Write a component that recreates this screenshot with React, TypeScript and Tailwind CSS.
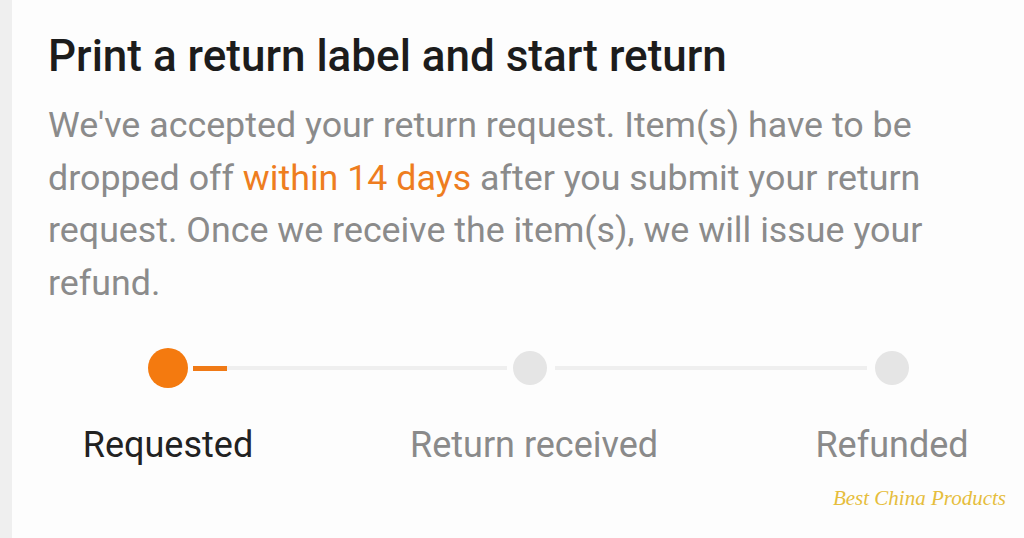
import React from "react";

const steps = [
    { label: "Requested", active: true },
    { label: "Return received", active: false },
    { label: "Refunded", active: false },
];

const App = (): JSX.Element => {
    return (
        <div className="relative flex flex-row w-[1024px] h-[538px] overflow-hidden bg-[#fdfdfd] font-['Roboto',sans-serif]">
            <div className="w-[12px] h-full bg-[#efefef]" />
            <div className="flex flex-col pl-[36px] pt-[30px]">
                <h1 className="text-[44px] leading-[52px] font-medium text-[#1c1c1c] whitespace-nowrap">
                    Print a return label and start return
                </h1>
                <p className="mt-[17px] w-[890px] text-[35.8px] leading-[52.5px] text-[#8b8b8b]">
                    We've accepted your return request. Item(s) have to be dropped off{" "}
                    <span className="text-[#ee7d1f]">within 14 days</span> after you submit your return request. Once we receive the item(s), we will issue your refund.
                </p>

                {/* stepper */}
                <div className="mt-[39px] ml-[100px] flex flex-row items-center">
                    <div className="w-[40px] h-[40px] rounded-full bg-[#f47a0f]" />
                    <div className="ml-[5px] w-[34px] h-[5px] bg-[#f07a16]" />
                    <div className="w-[280px] h-[4px] bg-[#efefef]" />
                    <div className="ml-[6px] w-[34px] h-[34px] rounded-full bg-[#e5e5e5]" />
                    <div className="ml-[8px] w-[312px] h-[4px] bg-[#efefef]" />
                    <div className="ml-[8px] w-[34px] h-[34px] rounded-full bg-[#e5e5e5]" />
                </div>
                <div className="mt-[36px] flex flex-row gap-[122px]">
                    {steps.map((step) => (
                        <span
                            key={step.label}
                            className={`w-[240px] text-center text-[36px] leading-[42px] whitespace-nowrap ${step.active ? "text-[#222222]" : "text-[#8a8a8a]"}`}
                        >
                            {step.label}
                        </span>
                    ))}
                </div>
            </div>
            <span className="absolute right-[18px] bottom-[24px] font-['Liberation_Serif',serif] italic text-[21px] text-[#e6bd3c]">
                Best China Products
            </span>
        </div>
    );
};

export default App;
